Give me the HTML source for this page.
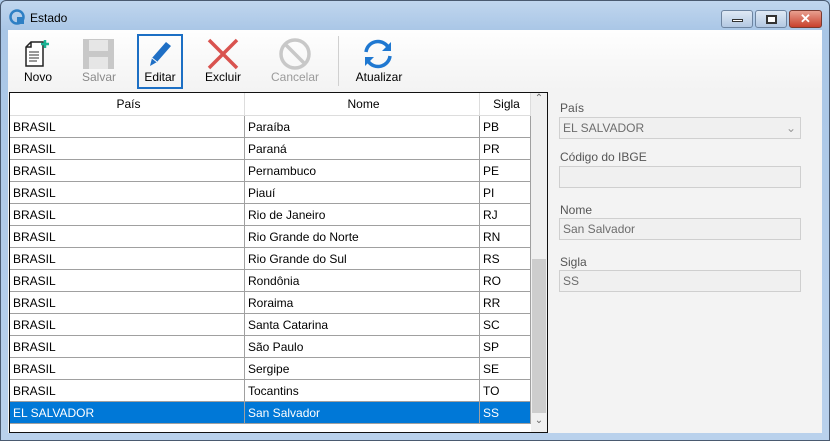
<!DOCTYPE html>
<html><head><style>
*{margin:0;padding:0;box-sizing:border-box}
body{width:830px;height:441px;overflow:hidden;background:#aecbea;font-family:"Liberation Sans",sans-serif;font-size:12px;position:relative}
.a{position:absolute}
.win{left:0;top:0;width:830px;height:441px;background:linear-gradient(#c0d6ee,#a9c6e6 30px,#b9d1ec);border:1px solid #4a5a70;border-radius:6px 6px 0 0}
.client{left:8px;top:30px;width:814px;height:403px;background:#f3f3f3}
.tb{left:8px;top:30px;width:814px;height:60px;background:linear-gradient(#fefefe,#f3f3f3)}
.lbl{font-size:12px;color:#000;text-align:center}
.grid{left:9px;top:92px;width:539px;height:341px;border:1px solid #111;background:#fff}
.row{position:absolute;left:0;width:521px;height:22px;border-bottom:1px solid #a0a0a0}
.row div{position:absolute;top:0;height:22px;line-height:22px;padding-left:3px;border-right:1px solid #a0a0a0}
.c1{left:0;width:235px}.c2{left:235px;width:235px}.c3{left:470px;width:51px}
.sel{background:#0078d7;color:#fff}
.fl{color:#555;font-size:12px}
.fd{width:242px;height:22px;border:1px solid #cfcfcf;background:#f0f0f0;color:#6d6d6d;padding-left:3px;line-height:20px}
</style></head><body>
<div class="a win"></div>
<svg class="a" style="left:9px;top:9px" width="16" height="16"><circle cx="8" cy="8" r="6.5" fill="none" stroke="#2e7fc4" stroke-width="2.5"/><rect x="8" y="8" width="7" height="7" fill="#2e7fc4"/></svg>
<div class="a" style="left:30px;top:11px;font-size:12px">Estado</div>
<div class="a" style="left:721px;top:10px;width:32px;height:18px;border:1px solid #6d84a0;border-radius:3px;background:linear-gradient(#dfe9f5,#b3c8e2)"><div class="a" style="left:10px;top:8px;width:11px;height:3px;background:#fff;border:1px solid #333"></div></div>
<div class="a" style="left:755px;top:10px;width:32px;height:18px;border:1px solid #6d84a0;border-radius:3px;background:linear-gradient(#dfe9f5,#b3c8e2)"><div class="a" style="left:10px;top:4px;width:11px;height:9px;border:2px solid #333;background:#fff"></div></div>
<div class="a" style="left:789px;top:10px;width:33px;height:18px;border:1px solid #7a3a30;border-radius:3px;background:linear-gradient(#e8a090,#c8402c);color:#fff;font-weight:bold;text-align:center;line-height:16px;font-size:13px">✕</div>
<div class="a client"></div>
<div class="a tb"></div>
<!-- Novo -->
<svg class="a" style="left:23px;top:38px" width="28" height="32"><path d="M8 4h12v24H3V9z" fill="#fff" stroke="#222" stroke-width="1.5"/><path d="M3 9h5V4" fill="none" stroke="#222" stroke-width="1.5"/><path d="M6 14h10M6 17h10M6 20h10M6 23h8" stroke="#333"/><path d="M22 2v8M18 6h8" stroke="#1ab394" stroke-width="2.5"/></svg>
<div class="a lbl" style="left:18px;top:70px;width:40px">Novo</div>
<!-- Salvar -->
<svg class="a" style="left:82px;top:38px" width="34" height="32"><rect x="1" y="1" width="31" height="30" fill="#c8c8c8"/><rect x="7" y="2" width="19" height="11" fill="#e6e6e6"/><rect x="7" y="19" width="19" height="12" fill="#e6e6e6"/></svg>
<div class="a lbl" style="left:78px;top:70px;width:42px;color:#8a8a8a">Salvar</div>
<!-- Editar -->
<div class="a" style="left:137px;top:34px;width:46px;height:55px;border:2px solid #1c6fc4"></div>
<svg class="a" style="left:146px;top:38px" width="28" height="32"><path d="M4 28l2-8L20 4l5 4L11 24z" fill="#1f6fc5"/><path d="M6 20l5 4" stroke="#fff" stroke-width="1"/></svg>
<div class="a lbl" style="left:139px;top:70px;width:42px">Editar</div>
<!-- Excluir -->
<svg class="a" style="left:206px;top:38px" width="34" height="32"><path d="M3 2l28 28M31 2L3 30" stroke="#d9534f" stroke-width="3.5"/></svg>
<div class="a lbl" style="left:200px;top:70px;width:46px">Excluir</div>
<!-- Cancelar -->
<svg class="a" style="left:278px;top:38px" width="34" height="32"><circle cx="17" cy="16" r="14" fill="none" stroke="#c8c8c8" stroke-width="3.5"/><path d="M7 6l20 20" stroke="#c8c8c8" stroke-width="3.5"/></svg>
<div class="a lbl" style="left:268px;top:70px;width:54px;color:#9a9a9a">Cancelar</div>
<div class="a" style="left:338px;top:36px;width:1px;height:50px;background:#d0d0d0"></div>
<!-- Atualizar -->
<svg class="a" style="left:361px;top:38px" width="34" height="32"><path d="M5 14A12 12 0 0 1 27 9" fill="none" stroke="#1f78d1" stroke-width="3.5"/><path d="M30 4v9h-9z" fill="#1f78d1"/><path d="M29 18A12 12 0 0 1 7 23" fill="none" stroke="#1f78d1" stroke-width="3.5"/><path d="M4 28v-9h9z" fill="#1f78d1"/></svg>
<div class="a lbl" style="left:350px;top:70px;width:58px">Atualizar</div>
<!-- Grid -->
<div class="a grid">
<div class="row" style="top:0;height:23px;border-bottom:1px solid #ddd"><div class="c1" style="text-align:center;border-right:1px solid #ddd">País</div><div class="c2" style="text-align:center;border-right:1px solid #ddd">Nome</div><div class="c3" style="text-align:center;border-right:1px solid #ddd">Sigla</div></div>
<div class="row" style="top:23px"><div class="c1">BRASIL</div><div class="c2">Paraíba</div><div class="c3">PB</div></div>
<div class="row" style="top:45px"><div class="c1">BRASIL</div><div class="c2">Paraná</div><div class="c3">PR</div></div>
<div class="row" style="top:67px"><div class="c1">BRASIL</div><div class="c2">Pernambuco</div><div class="c3">PE</div></div>
<div class="row" style="top:89px"><div class="c1">BRASIL</div><div class="c2">Piauí</div><div class="c3">PI</div></div>
<div class="row" style="top:111px"><div class="c1">BRASIL</div><div class="c2">Rio de Janeiro</div><div class="c3">RJ</div></div>
<div class="row" style="top:133px"><div class="c1">BRASIL</div><div class="c2">Rio Grande do Norte</div><div class="c3">RN</div></div>
<div class="row" style="top:155px"><div class="c1">BRASIL</div><div class="c2">Rio Grande do Sul</div><div class="c3">RS</div></div>
<div class="row" style="top:177px"><div class="c1">BRASIL</div><div class="c2">Rondônia</div><div class="c3">RO</div></div>
<div class="row" style="top:199px"><div class="c1">BRASIL</div><div class="c2">Roraima</div><div class="c3">RR</div></div>
<div class="row" style="top:221px"><div class="c1">BRASIL</div><div class="c2">Santa Catarina</div><div class="c3">SC</div></div>
<div class="row" style="top:243px"><div class="c1">BRASIL</div><div class="c2">São Paulo</div><div class="c3">SP</div></div>
<div class="row" style="top:265px"><div class="c1">BRASIL</div><div class="c2">Sergipe</div><div class="c3">SE</div></div>
<div class="row" style="top:287px"><div class="c1">BRASIL</div><div class="c2">Tocantins</div><div class="c3">TO</div></div>
<div class="row sel" style="top:309px"><div class="c1">EL SALVADOR</div><div class="c2">San Salvador</div><div class="c3">SS</div></div>
<div class="a" style="left:521px;top:0;width:16px;height:339px;background:#f0f0f0"></div>
<div class="a" style="left:522px;top:166px;width:14px;height:154px;background:#cdcdcd"></div>
<div class="a" style="left:521px;top:0;width:16px;font-size:10px;color:#666;text-align:center">⌃</div>
<div class="a" style="left:521px;top:322px;width:16px;font-size:10px;color:#666;text-align:center">⌄</div>
</div>
<!-- right panel -->
<div class="a fl" style="left:560px;top:101px">País</div>
<div class="a fd" style="left:559px;top:117px;border-color:#d0d0d0">EL SALVADOR<span style="position:absolute;right:4px;top:0;color:#999">⌄</span></div>
<div class="a fl" style="left:560px;top:150px">Código do IBGE</div>
<div class="a fd" style="left:559px;top:166px"></div>
<div class="a fl" style="left:560px;top:203px">Nome</div>
<div class="a fd" style="left:559px;top:218px">San Salvador</div>
<div class="a fl" style="left:560px;top:255px">Sigla</div>
<div class="a fd" style="left:559px;top:270px">SS</div>
</body></html>
